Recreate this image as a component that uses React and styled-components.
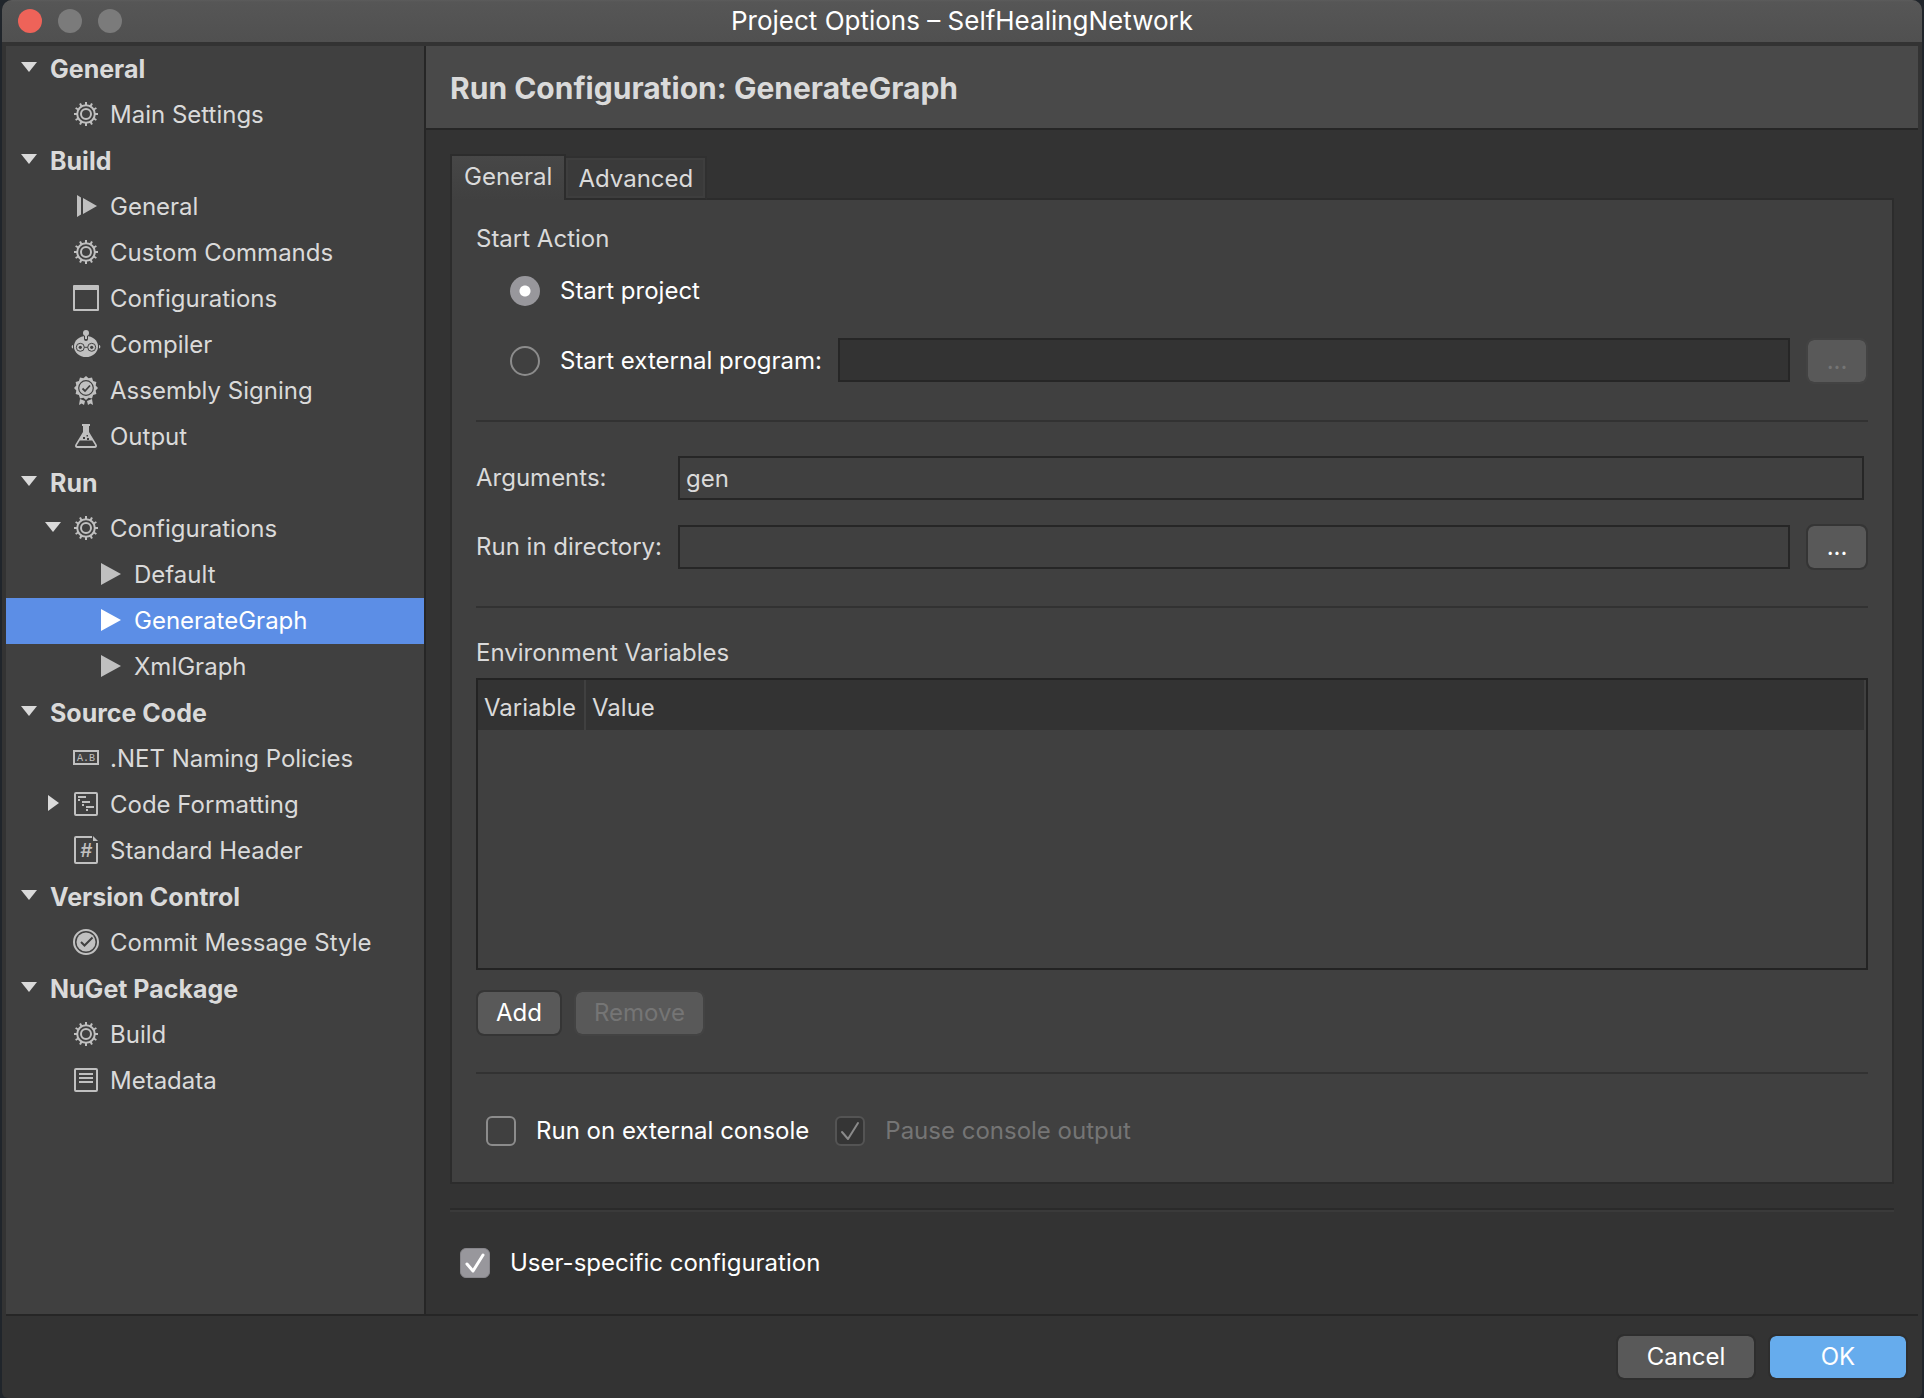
import React, { useState } from "react";
import styled, { createGlobalStyle, css } from "styled-components";

const color = {
  window: "#333333",
  panel: "#404040",
  header: "#494949",
  line: "#262626",
  softLine: "#2c2c2c",
  text: "#dadada",
  strong: "#ffffff",
  muted: "#757575",
  icon: "#c0c0c0",
  control: "#595959",
  selection: "#5c8ee6",
  accent: "#66aced",
};

const GlobalStyle = createGlobalStyle`
  *, *::before, *::after { box-sizing: border-box; }
  html { background: #20252b; }
  body {
    margin: 0;
    font-family: Inter, "Liberation Sans", sans-serif;
    font-size: 24px;
    line-height: 30px;
    color: ${color.text};
  }
  button, input { font: inherit; color: inherit; margin: 0; }
`;

const Window = styled.div`
  display: flex;
  flex-direction: column;
  min-height: 100vh;
  margin: 0 2px;
  border-radius: 10px 10px 6px 6px;
  overflow: hidden;
  background: ${color.window};
`;

const TitleBar = styled.header`
  display: grid;
  grid-template-columns: 1fr auto 1fr;
  align-items: center;
  height: 42px;
  padding: 0 16px;
  background: linear-gradient(#5c5c5c, #565656 2px, #505050);
`;

const Lights = styled.div`
  display: flex;
  gap: 16px;
`;

const Light = styled.button`
  width: 24px;
  height: 24px;
  padding: 0;
  border: 0;
  border-radius: 50%;
  background: ${(p) => (p.$close ? "#ee6359" : "#7b7b7b")};
`;

const WindowTitle = styled.h1`
  margin: 0;
  font-size: 26px;
  font-weight: 400;
  line-height: 30px;
  color: ${color.strong};
`;

const Body = styled.div`
  display: grid;
  grid-template-columns: 420px minmax(0, 1fr);
  flex: 1;
  margin: 4px 4px 0;
  border-bottom: 2px solid ${color.line};
`;

const Sidebar = styled.nav`
  background: ${color.panel};
  border-right: 2px solid ${color.line};
`;

const Tree = styled.ul`
  margin: 0;
  padding: 0;
  list-style: none;
`;

const TreeRow = styled.button`
  display: flex;
  align-items: center;
  gap: 5px;
  width: 100%;
  height: 46px;
  padding: 0 0 0 ${(p) => 11 + p.$level * 24}px;
  border: 0;
  text-align: left;
  background: ${(p) => (p.$selected ? color.selection : "transparent")};
  color: ${(p) => (p.$selected ? color.strong : color.text)};
  --glyph: ${(p) => (p.$selected ? color.strong : color.icon)};
`;

const TreeLabel = styled.span`
  padding-left: ${(p) => (p.$heading ? 4 : 3)}px;
  font-size: ${(p) => (p.$heading ? 25 : 24)}px;
  font-weight: ${(p) => (p.$heading ? 700 : 400)};
  white-space: nowrap;
`;

const Glyph = styled.svg`
  flex: none;
  width: ${(p) => p.$width || 32}px;
  height: 32px;
  fill: var(--glyph);
  --cut: ${color.panel};
`;

const Main = styled.main`
  display: flex;
  flex-direction: column;
`;

const PageHeader = styled.div`
  display: flex;
  align-items: center;
  height: 84px;
  padding: 2px 24px 0;
  background: ${color.header};
  border-bottom: 2px solid ${color.line};
`;

const PageTitle = styled.h2`
  margin: 0;
  font-size: 30px;
  line-height: 36px;
  font-weight: 700;
`;

const Content = styled.div`
  display: flex;
  flex-direction: column;
  flex: 1;
  padding: 24px 24px 28px;
`;

const Tabs = styled.div`
  display: flex;
  align-items: flex-end;
  height: 46px;
  margin-bottom: -2px;
  z-index: 1;
`;

const Tab = styled.button`
  border: 2px solid ${color.softLine};
  color: ${color.text};
  ${(p) =>
    p.$active
      ? css`
          height: 46px;
          padding: 0 12px 2px;
          border-bottom: 0;
          background: linear-gradient(#474747, ${color.panel});
        `
      : css`
          height: 44px;
          padding: 2px 12px 0;
          border-left: 0;
          border-top-color: #303030;
          border-right-color: #303030;
          background: #3a3a3a;
          box-shadow: inset 0 0 0 2px #3e3e3e;
        `}
`;

const Panel = styled.section`
  flex: 1;
  padding: 28px 24px;
  background: ${color.panel};
  border: 2px solid ${color.softLine};
`;

const SectionTitle = styled.h3`
  margin: 0 0 ${(p) => p.$gap}px;
  font-size: 24px;
  line-height: 22px;
  font-weight: 400;
`;

const Separator = styled.hr`
  height: 2px;
  margin: 36px 0 34px;
  border: 0;
  background: #323232;
`;

const ContentSeparator = styled.hr`
  width: 100%;
  height: 4px;
  margin: 24px 0 28px;
  border: 0;
  background: linear-gradient(#2a2a2a 50%, #3a3a3a 50%);
`;

const Row = styled.div`
  display: flex;
  align-items: center;
  gap: ${(p) => p.$gap || 16}px;
  min-height: ${(p) => p.$height || 46}px;
  margin-bottom: ${(p) => p.$below || 0}px;
  padding-left: ${(p) => p.$indent || 0}px;
  padding-right: ${(p) => p.$inset || 0}px;
`;

const ChoiceLabel = styled.label`
  display: flex;
  align-items: center;
  gap: 20px;
  white-space: nowrap;
  color: ${(p) => (p.$muted ? color.muted : color.strong)};
`;

const Field = styled.div`
  display: flex;
  align-items: center;
  flex: 1;
`;

const FieldLabel = styled.label`
  flex: none;
  width: 202px;
  white-space: nowrap;
`;

const TextInput = styled.input`
  flex: 1;
  align-self: flex-start;
  min-width: 0;
  height: 44px;
  padding: 0 6px;
  border: 2px solid ${color.line};
  border-radius: 0;
  outline: 0;
  background: ${color.panel};

  &:disabled {
    background: ${color.window};
  }
`;

const Button = styled.button`
  min-width: ${(p) => p.$min || 0}px;
  height: 46px;
  padding: 0 ${(p) => (p.$min ? 0 : 18)}px;
  border: 2px solid ${(p) => (p.$dialog ? "#2e2e2e" : "#353535")};
  border-radius: 8px;
  background: ${(p) => (p.$primary ? color.accent : color.control)};
  background-clip: padding-box;
  color: ${color.strong};

  &:disabled {
    border-color: #434343;
    color: ${color.muted};
  }
`;

const Radio = styled.input`
  appearance: none;
  width: 30px;
  height: 30px;
  border: 2px solid #8c8c8c;
  border-radius: 50%;

  &:checked {
    border: 0;
    background: radial-gradient(circle, #fff 5px, #98979c 6px);
  }
`;

const Box = styled.span`
  display: grid;

  > * {
    grid-area: 1 / 1;
  }
`;

const BoxInput = styled.input`
  appearance: none;
  width: 30px;
  height: 30px;
  border: 2px solid #8c8c8c;
  border-radius: 6px;

  &:checked {
    border: 1px solid #87868b;
    background: #98979c;
  }

  &:disabled {
    border: 2px solid #545454;
    background: #353535;
  }
`;

const Tick = styled.svg`
  width: 30px;
  height: 30px;
  fill: none;
  stroke: ${(p) => (p.$muted ? "#8a8a8a" : "#ffffff")};
  stroke-width: ${(p) => (p.$muted ? 2 : 3)};
  stroke-linecap: round;
  stroke-linejoin: round;
  pointer-events: none;
`;

const TableFrame = styled.div`
  min-height: 292px;
  margin-bottom: 20px;
  border: 2px solid #232323;
`;

const Table = styled.table`
  width: 100%;
  border-collapse: separate;
  border-spacing: 0;
  background: ${color.window};
`;

const HeadCell = styled.th`
  width: ${(p) => (p.$fit ? "108px" : "auto")};
  height: 50px;
  padding: 6px 6px 0;
  border-right: 2px solid ${color.panel};
  font-weight: 400;
  text-align: left;
`;

const Footer = styled.footer`
  display: flex;
  justify-content: flex-end;
  gap: 12px;
  padding: 18px 14px;
`;

const teeth = Array.from({ length: 12 }, (_, i) => i * 30);

const scallop = Array.from({ length: 24 }, (_, i) => {
  const angle = (i * Math.PI) / 12;
  const radius = i % 2 ? 10 : 12;
  const x = 16 + radius * Math.sin(angle);
  const y = 13 - radius * Math.cos(angle);
  return `${x.toFixed(2)},${y.toFixed(2)}`;
}).join(" ");

const ICONS = {
  gear: (
    <g fill="none" stroke="var(--glyph)" strokeWidth="2">
      <circle cx="16" cy="15" r="8.8" />
      <circle cx="16" cy="15" r="5" />
      {teeth.map((deg) => (
        <path key={deg} d="M16 3v3" transform={`rotate(${deg} 16 15)`} />
      ))}
    </g>
  ),
  step: <path d="M7 4l4 2.5v17L7 26zM13 7l14 8-14 8z" />,
  window: (
    <path
      fillRule="evenodd"
      d="M4 2h24a1 1 0 0 1 1 1v24a1 1 0 0 1-1 1H4a1 1 0 0 1-1-1V3a1 1 0 0 1 1-1zM5 7v19h22V7z"
    />
  ),
  robot: (
    <g>
      <ellipse cx="16" cy="17.5" rx="12" ry="10.5" />
      <path d="M14 6v4a2 2 0 0 0 4 0V6z" fill="var(--cut)" />
      <circle cx="16" cy="4" r="3" />
      <path d="M15 6h2v4h-2z" />
      <g fill="none" stroke="var(--cut)">
        <circle cx="10.3" cy="18.3" r="4" />
        <circle cx="21.7" cy="18.3" r="4" />
        <path d="M14.3 18.300h3.4" />
      </g>
      <circle cx="10.3" cy="18.3" r="1.6" fill="var(--cut)" />
      <circle cx="21.7" cy="18.3" r="1.6" fill="var(--cut)" />
      <path d="M3 16v3.5a1.8 1.8 0 0 1 0-3.5zM29 16v3.5a1.8 1.8 0 0 0 0-3.5z" />
    </g>
  ),
  badge: (
    <g>
      <polygon points={scallop} />
      <circle cx="16" cy="13" r="7.3" fill="none" stroke="var(--cut)" strokeWidth="1.2" />
      <path d="M12.5 13.500l2.500 2.500 5-5.500" fill="none" stroke="var(--cut)" strokeWidth="1.8" />
      <path d="M10 24l5 2-1 4-2.300-1.500L9 30zM22 24l-5 2 1 4 2.300-1.500L23 30z" />
    </g>
  ),
  flask: (
    <g>
      <path
        fillRule="evenodd"
        d="M12 3h8v2h-1v6l7.6 12.500c1 1.800 0 3.500-2 3.500H7.400c-2 0-3-1.700-2-3.500L13 11V5h-1zM9.800 19.500L7 24c-.4.7 0 1 .7 1h16.600c.7 0 1.100-.3.7-1l-2.800-4.500z"
      />
      <path d="M16.500 14h1.500v1.500h-1.500zM13 16h2v2h-2zM17 17h2v2h-2z" fill="var(--cut)" />
    </g>
  ),
  play: <path d="M7 4l20 11L7 26z" />,
  naming: (
    <g>
      <path d="M4 8h24v13H4z" fill="none" stroke="var(--glyph)" strokeWidth="2" />
      <text x="16" y="18" textAnchor="middle" fontSize="10" fontWeight="400" fontFamily="Liberation Mono, monospace">
        A.B
      </text>
    </g>
  ),
  format: (
    <g>
      <rect x="5" y="4" width="22" height="22" rx="1" fill="none" stroke="var(--glyph)" strokeWidth="2" />
      <path d="M8 7h8v2H8zM8 10h2v2H8zM12 12h8v2h-8zM12 15h2v2h-2zM16 17h8v2h-8zM16 20h2v2h-2z" />
    </g>
  ),
  hash: (
    <g>
      <path d="M22 2H6a1 1 0 0 0-1 1v24a1 1 0 0 0 1 1h20a1 1 0 0 0 1-1V8" fill="none" stroke="var(--glyph)" strokeWidth="2" />
      <path d="M23 1l5 5h-5z" />
      <text x="16" y="22" textAnchor="middle" fontSize="19" fontStyle="italic" fontWeight="500" fontFamily="Inter, sans-serif">
        #
      </text>
    </g>
  ),
  commit: (
    <g>
      <circle cx="16" cy="15" r="12" fill="none" stroke="var(--glyph)" strokeWidth="2" />
      <circle cx="16" cy="15" r="9.5" />
      <path d="M11 15l3.500 3.500 8-8" fill="none" stroke="var(--cut)" strokeWidth="2" />
    </g>
  ),
  document: (
    <g fill="none" stroke="var(--glyph)" strokeWidth="2">
      <rect x="5" y="4" width="22" height="22" rx="1" />
      <path d="M9 9h14M9 13h14M9 17h14" />
    </g>
  ),
};

const TREE = [
  { label: "General", level: 0, open: true },
  { label: "Main Settings", level: 1, icon: "gear" },
  { label: "Build", level: 0, open: true },
  { label: "General", level: 1, icon: "step" },
  { label: "Custom Commands", level: 1, icon: "gear" },
  { label: "Configurations", level: 1, icon: "window" },
  { label: "Compiler", level: 1, icon: "robot" },
  { label: "Assembly Signing", level: 1, icon: "badge" },
  { label: "Output", level: 1, icon: "flask" },
  { label: "Run", level: 0, open: true },
  { label: "Configurations", level: 1, icon: "gear", open: true },
  { label: "Default", level: 2, icon: "play" },
  { label: "GenerateGraph", level: 2, icon: "play" },
  { label: "XmlGraph", level: 2, icon: "play" },
  { label: "Source Code", level: 0, open: true },
  { label: ".NET Naming Policies", level: 1, icon: "naming" },
  { label: "Code Formatting", level: 1, icon: "format", open: false },
  { label: "Standard Header", level: 1, icon: "hash" },
  { label: "Version Control", level: 0, open: true },
  { label: "Commit Message Style", level: 1, icon: "commit" },
  { label: "NuGet Package", level: 0, open: true },
  { label: "Build", level: 1, icon: "gear" },
  { label: "Metadata", level: 1, icon: "document" },
];

function Expander({ open }) {
  return (
    <Glyph $width={24} viewBox="0 0 24 32" aria-hidden="true">
      {open === true && <path d="M4 9h16l-8 10z" fill={color.text} />}
      {open === false && <path d="M7 6l11 8-11 8z" fill={color.text} />}
    </Glyph>
  );
}

function CheckBox({ label, ...input }) {
  return (
    <ChoiceLabel $muted={input.disabled}>
      <Box>
        <BoxInput type="checkbox" {...input} />
        {input.checked && (
          <Tick $muted={input.disabled} viewBox="0 0 30 30" aria-hidden="true">
            <path d="M7 16l6 7L23 7" />
          </Tick>
        )}
      </Box>
      {label}
    </ChoiceLabel>
  );
}

export default function App() {
  const [selected, setSelected] = useState(12);
  const [action, setAction] = useState("project");
  const [args, setArgs] = useState("gen");
  const [directory, setDirectory] = useState("");
  const [external, setExternal] = useState(false);
  const [userSpecific, setUserSpecific] = useState(true);
  const isProgram = action === "program";

  return (
    <>
      <GlobalStyle />
      <Window>
        <TitleBar>
          <Lights>
            <Light $close aria-label="Close" />
            <Light aria-label="Minimize" />
            <Light aria-label="Zoom" />
          </Lights>
          <WindowTitle>Project Options – SelfHealingNetwork</WindowTitle>
        </TitleBar>

        <Body>
          <Sidebar>
            <Tree>
              {TREE.map((item, index) => (
                <li key={index}>
                  <TreeRow $level={item.level} $selected={index === selected} onClick={() => setSelected(index)}>
                    <Expander open={item.open} />
                    {item.icon && (
                      <Glyph viewBox="0 0 32 32" aria-hidden="true">
                        {ICONS[item.icon]}
                      </Glyph>
                    )}
                    <TreeLabel $heading={item.level === 0}>{item.label}</TreeLabel>
                  </TreeRow>
                </li>
              ))}
            </Tree>
          </Sidebar>

          <Main>
            <PageHeader>
              <PageTitle>Run Configuration: GenerateGraph</PageTitle>
            </PageHeader>

            <Content>
              <Tabs role="tablist">
                <Tab role="tab" aria-selected="true" $active>
                  General
                </Tab>
                <Tab role="tab" aria-selected="false">
                  Advanced
                </Tab>
              </Tabs>

              <Panel>
                <SectionTitle $gap={18}>Start Action</SectionTitle>
                <Row $indent={34} $below={24}>
                  <ChoiceLabel>
                    <Radio type="radio" name="action" checked={!isProgram} onChange={() => setAction("project")} />
                    Start project
                  </ChoiceLabel>
                </Row>
                <Row $indent={34}>
                  <ChoiceLabel>
                    <Radio type="radio" name="action" checked={isProgram} onChange={() => setAction("program")} />
                    Start external program:
                  </ChoiceLabel>
                  <TextInput aria-label="External program" disabled={!isProgram} />
                  <Button $min={62} disabled={!isProgram}>
                    ...
                  </Button>
                </Row>

                <Separator />

                <Row $height={44} $below={24} $inset={4}>
                  <Field>
                    <FieldLabel htmlFor="arguments">Arguments:</FieldLabel>
                    <TextInput id="arguments" value={args} onChange={(e) => setArgs(e.target.value)} />
                  </Field>
                </Row>
                <Row>
                  <Field>
                    <FieldLabel htmlFor="directory">Run in directory:</FieldLabel>
                    <TextInput id="directory" value={directory} onChange={(e) => setDirectory(e.target.value)} />
                  </Field>
                  <Button $min={62}>...</Button>
                </Row>

                <Separator />

                <SectionTitle $gap={14}>Environment Variables</SectionTitle>
                <TableFrame>
                  <Table>
                    <thead>
                      <tr>
                        <HeadCell $fit>Variable</HeadCell>
                        <HeadCell>Value</HeadCell>
                      </tr>
                    </thead>
                  </Table>
                </TableFrame>
                <Row $gap={12}>
                  <Button>Add</Button>
                  <Button disabled>Remove</Button>
                </Row>

                <Separator />

                <Row $indent={10} $gap={26}>
                  <CheckBox
                    label="Run on external console"
                    checked={external}
                    onChange={(e) => setExternal(e.target.checked)}
                  />
                  <CheckBox label="Pause console output" checked disabled readOnly />
                </Row>
              </Panel>

              <ContentSeparator />
              <Row $indent={10}>
                <CheckBox
                  label="User-specific configuration"
                  checked={userSpecific}
                  onChange={(e) => setUserSpecific(e.target.checked)}
                />
              </Row>
            </Content>
          </Main>
        </Body>

        <Footer>
          <Button $min={140} $dialog>
            Cancel
          </Button>
          <Button $min={140} $dialog $primary>
            OK
          </Button>
        </Footer>
      </Window>
    </>
  );
}
